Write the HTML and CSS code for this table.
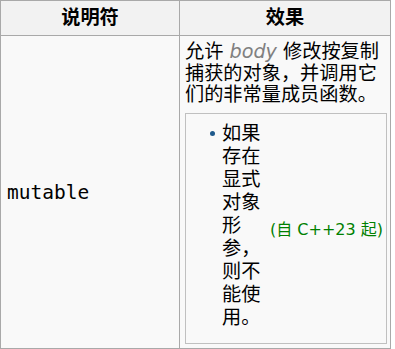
FILE: index.html
```html
<!DOCTYPE html>
<html lang="zh-CN">
<head>
<meta charset="utf-8">
<link rel="stylesheet" href="styles.css">
</head>
<body>
<div class="wikitable">
  <div class="th">说明符</div>
  <div class="th">效果</div>
  <div class="td spec"><code>mutable</code></div>
  <div class="td effect">
    <p class="desc">允许 <i class="spar">body</i> 修改按复制捕获的对象，并调用它们的非常量成员函数。</p>
    <div class="rev">
      <ul class="rev-list"><li>如果存在显式对象形参，则不能使用。</li></ul>
      <span class="rev-mark">(自 C++23 起)</span>
    </div>
  </div>
</div>
</body>
</html>
```
FILE: styles.css
```css
html, body {
  margin: 0;
  padding: 0;
  background: #ffffff;
}
body {
  font-family: "DejaVu Sans", "Noto Sans CJK SC", sans-serif;
  font-size: 19.2px;
  color: #000;
}
.wikitable {
  display: grid;
  grid-template-columns: 178px 210px;
  grid-template-rows: 34px 312px;
  gap: 1px;
  padding: 1px;
  width: 391px;
  box-sizing: border-box;
  background: #a9a9a9;
}
.th {
  background: #f2f2f2;
  font-weight: bold;
  display: flex;
  align-items: center;
  justify-content: center;
  line-height: 22px;
}
.td {
  background: #f9f9f9;
}
.spec {
  display: flex;
  align-items: center;
  padding-left: 6px;
}
.spec code {
  font-family: "DejaVu Sans Mono", monospace;
  font-size: 19.5px;
}
.effect {
  padding: 5px 3px 4px 5px;
  display: flex;
  flex-direction: column;
}
.desc {
  margin: 0 0 7px 0;
  line-height: 21.5px;
}
.spar {
  color: #808080;
  font-style: italic;
}
.rev {
  flex: 1;
  border: 1px solid #c0c0c0;
  display: flex;
  align-items: center;
  justify-content: space-between;
  padding-right: 3px;
}
.rev-list {
  margin: 0;
  padding: 0 0 6px 36px;
  list-style: none;
  line-height: 23px;
}
.rev-list li {
  width: 39px;
  position: relative;
}
.rev-list li::before {
  content: "";
  position: absolute;
  left: -12px;
  top: 9px;
  width: 5px;
  height: 5px;
  border-radius: 50%;
  background: #1f5a8c;
}
.rev-mark {
  color: #008000;
  font-size: 16px;
  white-space: nowrap;
}
```
